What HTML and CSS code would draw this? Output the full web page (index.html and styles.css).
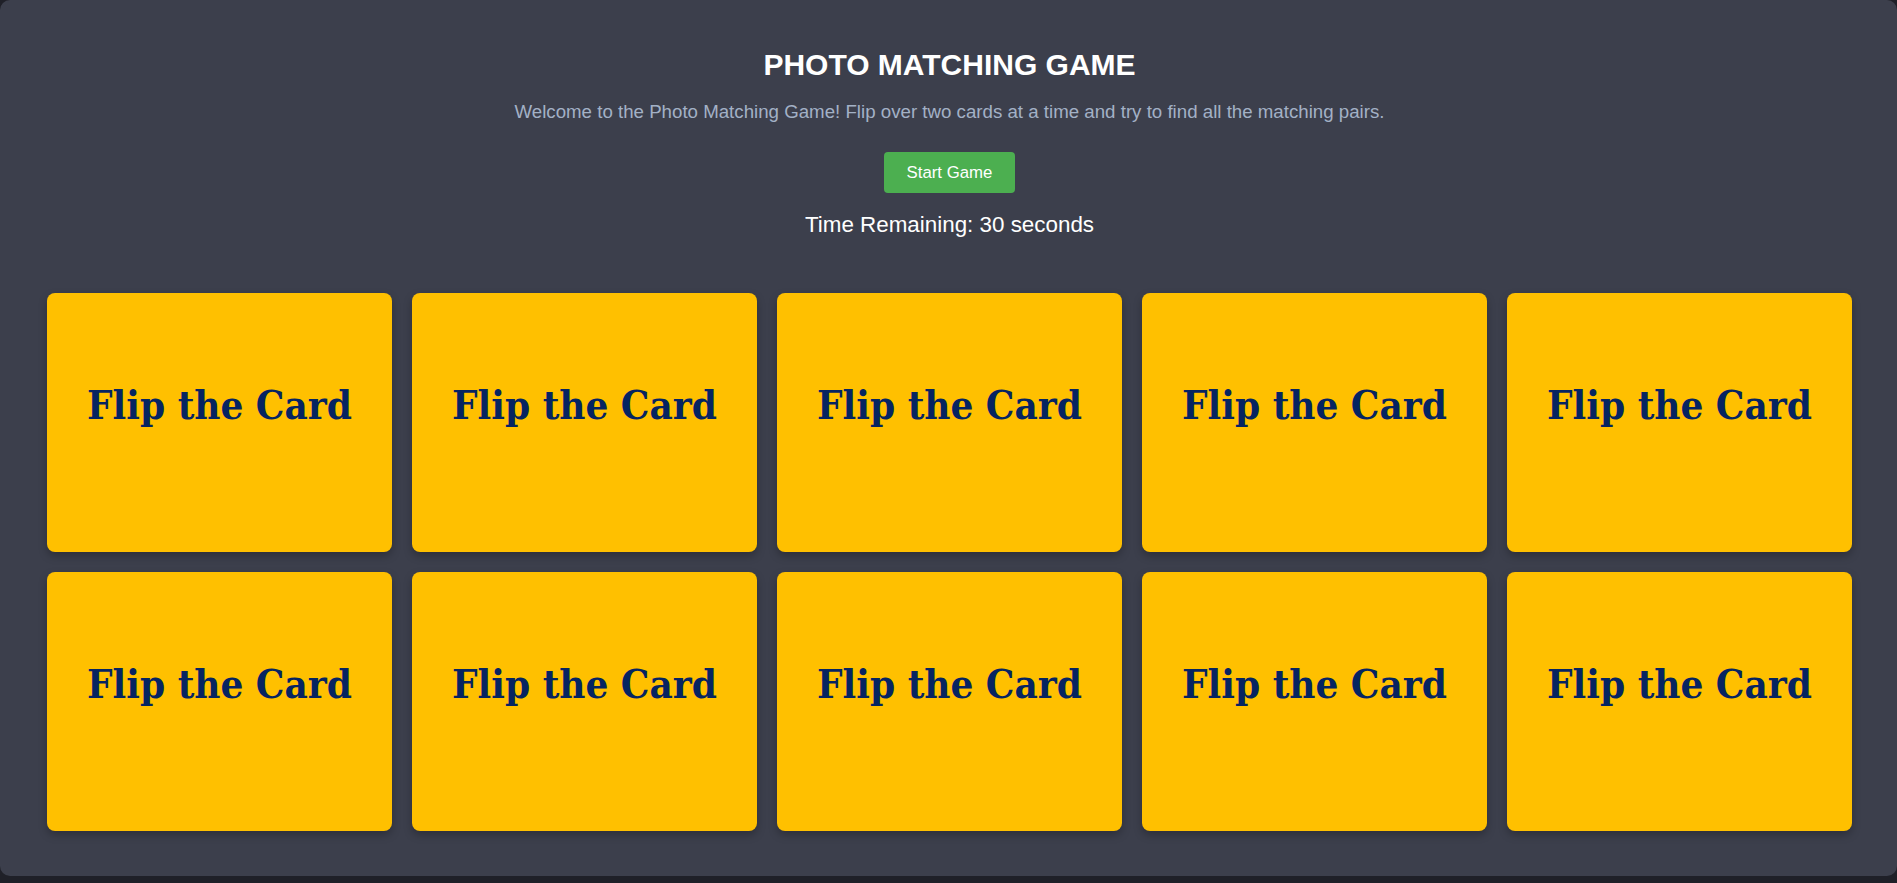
FILE: index.html
```html
<!DOCTYPE html>
<html lang="en">
<head>
<meta charset="utf-8">
<title>Photo Matching Game</title>
<link rel="stylesheet" href="styles.css">
</head>
<body>
<div class="container">
  <header class="header">
    <h1 class="title">PHOTO MATCHING GAME</h1>
    <p class="intro">Welcome to the Photo Matching Game! Flip over two cards at a time and try to find all the matching pairs.</p>
    <button class="start-btn">Start Game</button>
    <div class="timer">Time Remaining: 30 seconds</div>
  </header>
  <main class="grid">
    <div class="card"><h2 class="card-text">Flip the Card</h2></div>
    <div class="card"><h2 class="card-text">Flip the Card</h2></div>
    <div class="card"><h2 class="card-text">Flip the Card</h2></div>
    <div class="card"><h2 class="card-text">Flip the Card</h2></div>
    <div class="card"><h2 class="card-text">Flip the Card</h2></div>
    <div class="card"><h2 class="card-text">Flip the Card</h2></div>
    <div class="card"><h2 class="card-text">Flip the Card</h2></div>
    <div class="card"><h2 class="card-text">Flip the Card</h2></div>
    <div class="card"><h2 class="card-text">Flip the Card</h2></div>
    <div class="card"><h2 class="card-text">Flip the Card</h2></div>
  </main>
</div>
</body>
</html>
```
FILE: styles.css
```css
html, body {
  margin: 0;
  padding: 0;
  background: #1f2028;
  font-family: "Liberation Sans", Arial, sans-serif;
}

.container {
  background: #3c3f4c;
  border-radius: 10px;
  padding: 48px 45px 45px 47px;
}

.header {
  display: flex;
  flex-direction: column;
  align-items: center;
  text-align: center;
}

.title {
  margin: 0 0 19px;
  font-size: 30px;
  font-weight: bold;
  line-height: 34px;
  color: #ffffff;
}

.intro {
  margin: 0 0 30px;
  font-size: 18.7px;
  line-height: 21px;
  color: #a3b1c6;
}

.start-btn {
  margin: 0 0 19px;
  padding: 12px 23px;
  font-family: "Liberation Sans", Arial, sans-serif;
  font-size: 16.8px;
  line-height: 17px;
  color: #ffffff;
  background: #4caf50;
  border: none;
  border-radius: 4px;
}

.timer {
  margin: 0 0 56px;
  font-size: 22.4px;
  line-height: 25px;
  color: #ffffff;
}

.grid {
  display: grid;
  grid-template-columns: repeat(5, 1fr);
  gap: 20px;
}

.card {
  height: 259px;
  box-sizing: border-box;
  padding-top: 89px;
  background: #ffc000;
  border-radius: 8px;
  box-shadow: 0 4px 8px rgba(0, 0, 0, 0.25);
  text-align: center;
}

.card-text {
  margin: 0;
  font-family: "DejaVu Serif Condensed", "DejaVu Serif", serif;
  font-stretch: condensed;
  font-size: 40px;
  font-weight: bold;
  line-height: 46px;
  color: #062461;
}
```
